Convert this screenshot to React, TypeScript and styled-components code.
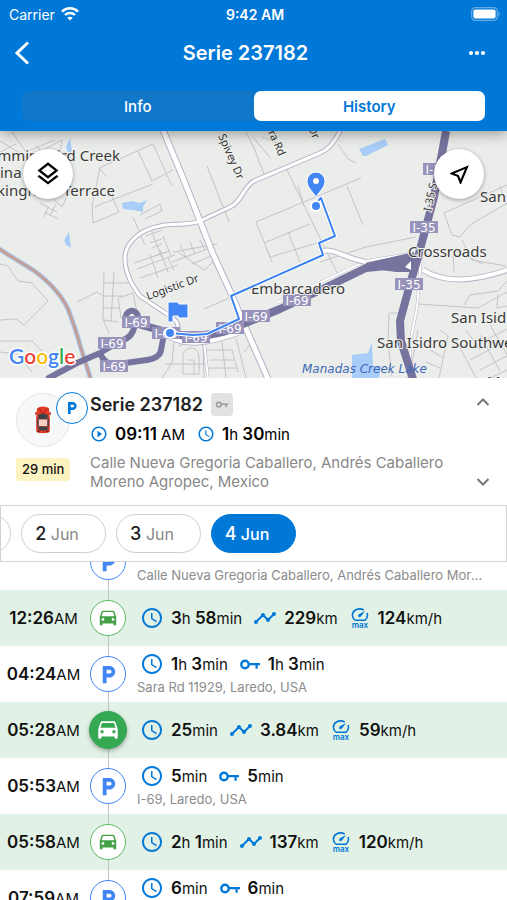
import React, { useLayoutEffect, useRef, useState } from 'react';
import styled, { createGlobalStyle, css } from 'styled-components';
import {
  MdAccessTime,
  MdOutlineLayers,
  MdOutlineNearMe,
  MdPlayCircleOutline,
  MdTimeline,
} from 'react-icons/md';

const BLUE = '#0078d7';
const PARK = '#4285f4';
const GREEN = '#34a853';

const GlobalStyle = createGlobalStyle`
  *, *::before, *::after { box-sizing: border-box; }
  body {
    margin: 0;
    background: #fff;
    color: #111;
    font-family: Inter, "Liberation Sans", sans-serif;
  }
  button { font: inherit; color: inherit; background: none; border: 0; padding: 0; cursor: pointer; }
  svg { display: block; flex: none; }
`;

const Screen = styled.div`
  display: flex;
  flex-direction: column;
  height: 100vh;
  overflow: hidden;
`;

const Header = styled.header`
  position: relative;
  z-index: 2;
  background: ${BLUE};
  color: #fff;
  padding-bottom: 10px;
  box-shadow: 0 2px 14px rgba(0, 0, 0, 0.4);
`;

const StatusBar = styled.div`
  display: grid;
  grid-template-columns: 1fr auto 1fr;
  align-items: center;
  height: 28px;
  padding: 0 6px 0 9px;
  font-size: 14px;
`;

const Carrier = styled.span`
  display: flex;
  align-items: center;
  gap: 6px;
`;

const Clock = styled.span`
  font-size: 14px;
  font-weight: 600;
`;

const Battery = styled.span`
  justify-self: end;
`;

const NavBar = styled.div`
  display: grid;
  grid-template-columns: 44px 1fr 60px;
  align-items: center;
  height: 50px;
`;

const NavButton = styled.button`
  display: grid;
  place-items: center;
  height: 44px;
`;

const NavTitle = styled.h1`
  margin: 0;
  font-size: 20px;
  font-weight: 600;
  text-align: center;
`;

const Segments = styled.div`
  display: flex;
  margin: 13px 22px 0;
  height: 30px;
  border-radius: 7px;
  background: #1177c9;
`;

const Segment = styled.button<{ $on?: boolean }>`
  flex: 1;
  border-radius: 7px;
  font-size: 15px;
  font-weight: 500;
  ${({ $on }) =>
    $on &&
    css`
      background: #fff;
      color: ${BLUE};
      font-weight: 600;
    `}
`;

const MapArea = styled.section`
  position: relative;
  flex: none;
  background: #ebedea;
`;

const MapCanvas = styled.svg`
  width: 100%;
  height: 247px;
`;

const MapButton = styled.button<{ $side: 'left' | 'right' }>`
  position: absolute;
  top: 18px;
  ${({ $side }) => $side}: 23px;
  display: grid;
  place-items: center;
  width: 50px;
  height: 50px;
  border-radius: 50%;
  background: #fff;
  color: #000;
  box-shadow: 0 1px 4px rgba(0, 0, 0, 0.35);
`;

const Card = styled.section`
  display: grid;
  grid-template-columns: 74px 1fr 28px;
  flex: none;
  padding: 15px 10px 14px 16px;
`;

const Avatar = styled.div`
  position: relative;
  display: grid;
  place-items: center;
  width: 54px;
  height: 54px;
  border: 1px solid #e4e4e4;
  border-radius: 50%;
  background: #f7f8f8;
`;

const AvatarBadge = styled.span`
  position: absolute;
  top: -2px;
  left: 39px;
  display: grid;
  place-items: center;
  width: 32px;
  height: 32px;
  border: 1px solid ${BLUE};
  border-radius: 50%;
  background: #fff;
  color: ${BLUE};
`;

const Elapsed = styled.span`
  display: inline-block;
  margin-top: 11px;
  padding: 3px 6px;
  border-radius: 3px;
  background: #fdf3c0;
  font-size: 13px;
  font-weight: 500;
  line-height: 17px;
  white-space: nowrap;
`;

const TitleLine = styled.div`
  display: flex;
  align-items: center;
  gap: 8px;
  height: 22px;
`;

const CardTitle = styled.h2`
  margin: 0;
  color: #222;
  font-size: 18px;
  font-weight: 600;
`;

const KeyTag = styled.span`
  display: grid;
  place-items: center;
  width: 22px;
  height: 23px;
  border-radius: 4px;
  background: #e2e2e2;
  color: #999;
`;

const CardFacts = styled.div`
  display: flex;
  align-items: center;
  gap: 12px;
  height: 26px;
  margin-top: 6px;
  color: #000;
`;

const Address = styled.p`
  margin: 6px 0 0;
  color: #888;
  font-size: 15px;
  line-height: 19px;
`;

const Steppers = styled.div`
  display: flex;
  flex-direction: column;
  justify-content: space-between;
  align-items: center;
  color: #777;
`;

const StepButton = styled.button`
  display: grid;
  place-items: center;
  width: 28px;
  height: 18px;
`;

const DayStrip = styled.nav`
  display: flex;
  flex: none;
  gap: 10px;
  padding: 8px calc(50% - 43px);
  border: 1px solid #d2d2d2;
  overflow-x: auto;
  scrollbar-width: none;
`;

const DayChip = styled.button<{ $on?: boolean }>`
  flex: none;
  width: 85px;
  height: 39px;
  padding-right: 12px;
  border: 1px solid #cfcfcf;
  border-radius: 20px;
  background: #fff;
  color: #888;
  font-size: 16px;
  b { color: #222; font-size: 18px; font-weight: 500; }
  ${({ $on }) =>
    $on &&
    css`
      border-color: ${BLUE};
      background: ${BLUE};
      color: #fff;
      font-weight: 500;
      b { color: #fff; }
    `}
`;

const Timeline = styled.ol`
  flex: 1;
  min-height: 0;
  margin: 0;
  padding: 0;
  list-style: none;
  overflow-y: auto;
  scrollbar-width: none;
`;

const Row = styled.li<{ $trip: boolean }>`
  display: grid;
  grid-template-columns: 87px 42px 1fr;
  height: 56px;
  background: ${({ $trip }) => ($trip ? '#e1f1e5' : '#fff')};
`;

const RowTime = styled.time`
  align-self: center;
  text-align: center;
`;

const Rail = styled.div`
  display: grid;
  place-items: center;
  background: linear-gradient(#c2c6c4, #c2c6c4) center / 1px 100% no-repeat;
`;

const Marker = styled.button<{ $kind: Kind }>`
  display: grid;
  place-items: center;
  width: 36px;
  height: 36px;
  border: 1px solid ${PARK};
  border-radius: 50%;
  background: #fff;
  color: ${PARK};
  ${({ $kind }) =>
    $kind === 'trip' &&
    css`
      border-color: #5cb860;
      color: #43a047;
    `}
  ${({ $kind }) =>
    $kind === 'active' &&
    css`
      width: 38px;
      height: 38px;
      border-color: ${GREEN};
      background: ${GREEN};
      color: #fff;
      box-shadow: 0 2px 4px rgba(0, 0, 0, 0.3);
    `}
`;

const RowBody = styled.div`
  display: flex;
  flex-direction: column;
  justify-content: center;
  min-width: 0;
  padding: 0 18px 0 8px;
`;

const Stats = styled.div`
  display: flex;
  align-items: center;
  gap: 11px;
  height: 24px;
  padding-left: 3px;
`;

const Stat = styled.span`
  display: flex;
  align-items: center;
  gap: 7px;
  white-space: nowrap;
  > svg { color: ${BLUE}; }
`;

const Place = styled.p`
  margin: 3px 0 0;
  color: #8c8c8c;
  font-size: 13px;
  line-height: 17px;
  white-space: nowrap;
  overflow: hidden;
  text-overflow: ellipsis;
`;

const Figure = styled.span`
  font-size: 15px;
  b { font-size: 17px; font-weight: 600; }
`;

/* "3h 58min" -> larger digits followed by small units */
const Value = ({ text }: { text: string }) => (
  <Figure>
    {text.split(/([\d:.]+)/).map((part, i) => (i % 2 ? <b key={i}>{part}</b> : part))}
  </Figure>
);

const WifiIcon = () => (
  <svg width="18" height="14" viewBox="0 0 18 14" fill="none" stroke="#fff" strokeWidth="2.4" aria-hidden>
    <path d="M1 4.600C5.400.2 12.600.2 17 4.600" />
    <path d="M4 8c2.800-2.700 7.200-2.700 10 0" />
    <path d="M9 13.600 6.200 10.800c1.600-1.500 4-1.500 5.600 0z" fill="#fff" stroke="none" />
  </svg>
);

const BatteryIcon = () => (
  <svg width="30" height="14" viewBox="0 0 30 14" aria-hidden>
    <rect x=".7" y=".7" width="25.600" height="12.600" rx="3.600" fill="none" stroke="#68ace6" strokeWidth="1.200" />
    <rect x="2.400" y="2.400" width="22.200" height="9.200" rx="2" fill="#fff" />
    <path d="M27.500 4.600c1.600.6 1.600 4.200 0 4.800z" fill="#68ace6" />
  </svg>
);

const BackIcon = () => (
  <svg width="16" height="26" viewBox="0 0 16 26" fill="none" stroke="#fff" strokeWidth="3" aria-hidden>
    <path d="M14 2.500 3 13l11 10.500" />
  </svg>
);

const DotsIcon = () => (
  <svg width="18" height="6" viewBox="0 0 18 6" fill="#fff" aria-hidden>
    <circle cx="3" cy="3" r="2.100" />
    <circle cx="9" cy="3" r="2.100" />
    <circle cx="15" cy="3" r="2.100" />
  </svg>
);

const ParkingIcon = ({ size }: { size: number }) => (
  <svg width={size} height={size} viewBox="0 0 24 24" fill="currentColor" aria-hidden>
    <path d="M13 3H6v18h4v-6h3c3.310 0 6-2.690 6-6s-2.690-6-6-6zm.2 8H10V7h3.200c1.100 0 2 .9 2 2s-.9 2-2 2z" />
  </svg>
);

const FrontCarIcon = ({ size }: { size: number }) => (
  <svg width={size} height={size} viewBox="0 0 24 24" fill="currentColor" aria-hidden>
    <path d="M18.920 5.010C18.720 4.420 18.160 4 17.500 4h-11c-.66 0-1.210.42-1.420 1.010L3 11v8c0 .55.45 1 1 1h1c.55 0 1-.45 1-1v-1h12v1c0 .55.45 1 1 1h1c.55 0 1-.45 1-1v-8l-2.080-5.990zM6.500 15c-.83 0-1.500-.67-1.500-1.500S5.670 12 6.500 12s1.500.67 1.500 1.500S7.330 15 6.500 15zm11 0c-.83 0-1.500-.67-1.500-1.500s.67-1.500 1.500-1.500 1.500.67 1.500 1.500-.67 1.500-1.500 1.500zM5 10l1.500-4.500h11L19 10H5z" />
  </svg>
);

const KeyIcon = ({ width = 22 }: { width?: number }) => (
  <svg width={width} height={width / 2} viewBox="0 0 22 11" fill="none" stroke="currentColor" aria-hidden>
    <circle cx="6" cy="5.500" r="3.700" strokeWidth="2.400" />
    <path d="M10 5.200H21M17.600 5v4.800" strokeWidth="2.200" />
  </svg>
);

const SpeedIcon = () => (
  <svg width="22" height="21" viewBox="-2 0 22 21" fill="none" stroke="currentColor" aria-hidden>
    <path d="M4 12.200h10c1.700-1.400 2.500-3 2.500-4.900 0-.8-.2-1.600-.5-2.300M4 12.200C.4 9.200.6 4.300 4.500 2 7 .6 10.300.6 12.700 2" strokeWidth="1.600" />
    <path d="M7.300 8.600c-.6-1 .2-2 1-2.500L14 3l-3.900 5.300c-.7 1-2.200 1.200-2.800.3z" fill="currentColor" stroke="none" />
    <text x="9" y="20" textAnchor="middle" fontSize="8" fontWeight="600" fill="currentColor" stroke="none">max</text>
  </svg>
);

const ChevronIcon = ({ up }: { up?: boolean }) => (
  <svg width="14" height="10" viewBox="0 0 14 10" fill="none" stroke="currentColor" strokeWidth="2" aria-hidden>
    <path d={up ? 'M1.500 8 7 2.500 12.500 8' : 'M1.500 2 7 7.500 12.500 2'} />
  </svg>
);

const CarIcon = () => (
  <svg width="18" height="30" viewBox="0 0 18 30" aria-hidden>
    <path d="M1 8.500h2M15 8.500h2" stroke="#c0281c" strokeWidth="2" />
    <path d="M3 3.500C5 .8 13 .8 15 3.500l.8 9V26c-1 3-12.600 3-13.600 0V12.500z" fill="#e23b2a" />
    <path d="M5 3.200 8 8h2l3-4.800" fill="none" stroke="#b82317" strokeWidth="1" />
    <path d="M4 10.500c2-2.500 8-2.500 10 0l-1 4H5z" fill="#3d4247" />
    <path d="M3.200 12.500 4.800 15v6l-1.600 2zM14.800 12.500 13.200 15v6l1.600 2z" fill="#3d4247" />
    <path d="M4.800 14.500h8.400v6.500H4.800z" fill="#f9cfc4" />
    <path d="M5 21.500h8l1 3c-2.500 1.500-7.500 1.500-10 0z" fill="#3d4247" />
    <path d="M3 26.500h3M12 26.500h3" stroke="#8e1a12" strokeWidth="1.500" />
  </svg>
);

const minorRoads = [
  'M0 141 28 158 62 140 60 152 45 160M30 150 55 140M36 146l20 18M0 152l16-8M12 132l24 34',
  'M99 168 153 144 172 186M99 168 107 177 M100 168 92 206 93 223 119 212 110 192M94 207 153 184M138 151 152 181 173 170',
  'M40 203l17 9M50 196l12 11 8-18M44 212l14 7M48 208 44 217M56 204 50 216',
  'M133 217 145 245M140 215 160 204 162 211 145 219M146 236l16-6M150 243l12-4M152 248l10-4M154 256l12-4M163 236l8 20M152 232l10 26M173 252l44-8M172 262l38-14M180 245l6 12M190 242l5 12M200 240l5 10',
  'M134 263l36-12M137 269l38-14M140 278l38-13M150 254l8 24M160 250l8 22M168 258l6 12M178 252l26 18 14-12M192 264l24-10',
  'M246 132 253 146M207 166 229 222M253 145 264 174M262 137l20 8M285 166 340 279M253 137l18 22M338 144l10 15 8 4',
  'M256 222 361 178M347 186 363 225M256 222 270 257M264 243 310 224M288 232 300 262M270 257 320 242M304 206l-6-20M204 309l46-20M272 262l-6-14',
  'M320 262l46-15 50-10M0 264l8 2 10 15 14 2 16 18-24 24-8-6-16 1M0 341h32l10 10 4 14 20 8M0 352l18 2 14 18',
  'M104 271l-1 48 6 14M114 272l-3 50M104 283h24M103 296h20M102 308h18M77 302l20-10 6 4M119 298l14-5 5 24-16 8M121 318l-3-20M104 320l14 2',
  'M174 341l-2 22-10 15M178 346l18-5 7 5 1 32M183 357c0-12 16-12 16 0v17h-16zM188 360h6v14M206 350h26l6 22M210 360h24M222 342l4 36M236 338l10 40M207 368h30M252 342l-8 10M165 364h40',
  'M444 213l63-28M444 213l8 22 8 2 10-12 37-22M500 186l6 18M462 240l10 20 34 6M453 250l30 14',
  'M418 304l60 4 29-16M464 305l6-10 28-4 9-10M390 313h8M389 313l-1 30 4 34M453 254l1 18M498 294l-1 14 10-2',
  'M418 330l-8 44M440 330l8 6-9 42M430 350l14 8M426 362l14 6M456 340l20 38M466 330l14 20M476 345l31-16M470 360l37-20M480 370l27-14M490 378l17-8M490 325l17 30M480 335l20 36',
];

const majorRoads = [
  'M163 130 183 178 200 221 213 254 230 291 247 331 268 379',
  'M340 131Q332 148 320 153L254 181C243 187 242 202 230 207L200 221C188 226 174 223 160 226C138 230 126 244 125 256C124 274 134 288 140 296L170 316Q179 321 178 330',
];

const sideRoads = ['M423 270C442 282 470 283 507 270', 'M322 251C334 248 344 258 366 262', 'M170 337C186 346 206 344 238 333'];

const rampRoads = 'M421 257 417 308 411 338 409 378M449 131 436 194M276 303 334 276 366 261 408 254M204 341l4 37';

const highways = [
  'M47 379 77 363 100 353 120 341Q134 338 135 322A6 6 0 1 0 126 318',
  'M100 353Q105 366 118 364L147 360Q160 358 161 350L164 334',
  'M138 324 170 333C190 338 206 336 226 331L280 309 333 284 366 268 396 265 416 258',
  'M446 131 434 197 418 257 410 284 400 321 401 341 413 379',
];

const shields: [number, number, string][] = [
  [136, 322, 'I-69'],
  [112, 343, 'I-69'],
  [114, 366, 'I-69'],
  [166, 333, 'I-69'],
  [196, 337, 'I-69'],
  [230, 328, 'I-69'],
  [256, 316, 'I-69'],
  [297, 300, 'I-69'],
  [437, 169, 'I-35'],
  [424, 227, 'I-35'],
  [409, 284, 'I-35'],
];

const TownLabel = styled.text`
  font: 15px "Noto Sans", "Open Sans", sans-serif;
  fill: #3a3a3a;
  stroke: #f1f2f0;
  stroke-width: 2px;
  paint-order: stroke;
`;

const StreetLabel = styled.text`
  font: 11px "Noto Sans", "Open Sans", sans-serif;
  fill: #333;
  stroke: #f1f2f0;
  stroke-width: 2px;
  paint-order: stroke;
`;

const WaterLabel = styled.text`
  font: italic 12px "DejaVu Sans", sans-serif;
  fill: #3b68b8;
`;

const ShieldLabel = styled.text`
  font: 12px "DejaVu Sans", sans-serif;
  fill: #fff;
  text-anchor: middle;
`;

const Wordmark = styled.text`
  font: 600 21px Lato, sans-serif;
  stroke: #fff;
  stroke-width: 3px;
  stroke-linejoin: round;
  paint-order: stroke;
`;

const CityMap = () => (
  <MapCanvas viewBox="0 131 507 247" preserveAspectRatio="xMidYMid slice" role="img" aria-label="Trip map">
    <rect x="-200" y="100" width="1000" height="320" fill="#ebedea" />
    <g fill="#a9cdf8">
      <path d="M66 147l4-9 2 13-4 2zM122 203l10-2 8 2 7-3-4 7 0 5-10-2-10-1zM64 240l5-8 2 16-5-3zM359 149l26-10 3 6-22 11-3 0z" />
      <path d="M352 379v-24l16-2 4-11 1 24 8 0-2 13z" />
    </g>
    <path d="M-5 246 7 254 33 270Q58 288 68 309 76 330 80 345L91 380" fill="none" stroke="#aacbf2" strokeWidth="5" />
    <path d="M-5 246 7 254 33 270Q58 288 68 309 76 330 80 345L91 380" fill="none" stroke="#c39f98" strokeWidth="3" />
    <g fill="none" stroke="#c3c4cb" strokeWidth="1">
      {minorRoads.map((d) => (
        <path key={d} d={d} />
      ))}
    </g>
    <g fill="none" strokeLinejoin="round">
      <path d={rampRoads} stroke="#b5b3c8" strokeWidth="3" />
      <path d={rampRoads} stroke="#fff" strokeWidth="2" />
      {sideRoads.map((d) => (
        <path key={d} d={d} stroke="#b9b9c9" strokeWidth="6" />
      ))}
      {majorRoads.map((d, i) => (
        <path key={d} d={d} stroke="#b3b2c6" strokeWidth={i ? 5 : 7} />
      ))}
      {sideRoads.map((d) => (
        <path key={d} d={d} stroke="#fff" strokeWidth="4" />
      ))}
      {majorRoads.map((d, i) => (
        <path key={d} d={d} stroke="#fff" strokeWidth={i ? 3 : 5} />
      ))}
      {highways.map((d, i) => (
        <path key={d} d={d} stroke="#77739f" strokeWidth={i < 2 ? 6 : 8} />
      ))}
      <path d="M366 263 414 252 412 272 396 272 366 268z" fill="#77739f" />
      <path d="M405 267l6-6 0 9z" fill="#fff" />
    </g>
    {shields.map(([x, y, name]) => (
      <g key={`${x}-${y}`}>
        <rect x={x - 14} y={y - 6} width="28" height="12" fill="#9893ba" />
        <ShieldLabel x={x} y={y + 5}>{name}</ShieldLabel>
      </g>
    ))}
    <TownLabel x="120" y="161" textAnchor="end">Hummingbird Creek</TownLabel>
    <TownLabel x="0" y="178">ina</TownLabel>
    <TownLabel x="115" y="196" textAnchor="end">Buckingham Terrace</TownLabel>
    <TownLabel x="480" y="202">San</TownLabel>
    <TownLabel x="408" y="257">Crossroads</TownLabel>
    <TownLabel x="251" y="294">Embarcadero</TownLabel>
    <TownLabel x="451" y="323">San Isidro</TownLabel>
    <TownLabel x="377" y="348">San Isidro Southwest</TownLabel>
    <TownLabel x="487" y="387">Manadas</TownLabel>
    <WaterLabel x="302" y="373">Manadas Creek Lake</WaterLabel>
    <StreetLabel transform="translate(218 136) rotate(66)">Spivey Dr</StreetLabel>
    <StreetLabel transform="translate(263 121) rotate(66)">Sara Rd</StreetLabel>
    <StreetLabel transform="translate(302 115) rotate(66)">ey Dr</StreetLabel>
    <StreetLabel transform="translate(148 300) rotate(-20)">Logistic Dr</StreetLabel>
    <StreetLabel transform="translate(431 212) rotate(-78)">I-35 S</StreetLabel>
    <g fill="none" strokeLinejoin="round">
      <path d="M316 203 321 198 335 236 319 243 323 255 231 296 239 319 207 334 193 335 170 333" stroke="#fff" strokeWidth="4" />
      <path d="M316 203 321 198 335 236 319 243 323 255 231 296 239 319 207 334 193 335 170 333" stroke="#3b82f0" strokeWidth="2" />
    </g>
    <g stroke="#fff" strokeWidth="2" fill={PARK}>
      <circle cx="316" cy="206" r="5" />
      <circle cx="170" cy="333" r="5" />
      <path d="M168 302h10l1 2h9v14h-9l-1-2h-5v6h-5z" strokeWidth="1" />
      <path d="M316 197c-4-6-9-10-9-16a9 9 0 0 1 18 0c0 6-5 10-9 16z" strokeWidth="1" />
    </g>
    <circle cx="316" cy="181" r="3" fill="#fff" />
    <Wordmark x="9" y="364">
      <tspan fill="#4285f4">G</tspan>
      <tspan fill="#ea4335">o</tspan>
      <tspan fill="#fbbc05">o</tspan>
      <tspan fill="#4285f4">g</tspan>
      <tspan fill="#34a853">l</tspan>
      <tspan fill="#ea4335">e</tspan>
    </Wordmark>
  </MapCanvas>
);

type Kind = 'park' | 'trip' | 'active';

interface Entry {
  time?: string;
  kind: Kind;
  duration: string;
  engine?: string;
  place?: string;
  distance?: string;
  speed?: string;
}

const entries: Entry[] = [
  { kind: 'park', duration: '26min', engine: '26min', place: 'Calle Nueva Gregoria Caballero, Andrés Caballero Moreno Agropec, Mexico' },
  { time: '12:26', kind: 'trip', duration: '3h 58min', distance: '229km', speed: '124km/h' },
  { time: '04:24', kind: 'park', duration: '1h 3min', engine: '1h 3min', place: 'Sara Rd 11929, Laredo, USA' },
  { time: '05:28', kind: 'active', duration: '25min', distance: '3.84km', speed: '59km/h' },
  { time: '05:53', kind: 'park', duration: '5min', engine: '5min', place: 'I-69, Laredo, USA' },
  { time: '05:58', kind: 'trip', duration: '2h 1min', distance: '137km', speed: '120km/h' },
  { time: '07:59', kind: 'park', duration: '6min', engine: '6min', place: 'I-69, Laredo, USA' },
];

const TimelineRow = ({ entry }: { entry: Entry }) => {
  const parked = entry.kind === 'park';
  return (
    <Row $trip={!parked}>
      <RowTime>{entry.time && <Value text={`${entry.time}AM`} />}</RowTime>
      <Rail>
        <Marker $kind={entry.kind} aria-label={`${parked ? 'Parked' : 'Trip'} ${entry.time ?? ''}`}>
          {parked ? <ParkingIcon size={23} /> : <FrontCarIcon size={entry.kind === 'active' ? 26 : 22} />}
        </Marker>
      </Rail>
      <RowBody>
        <Stats>
          <Stat>
            <MdAccessTime size={24} />
            <Value text={entry.duration} />
          </Stat>
          {entry.engine && (
            <Stat>
              <KeyIcon />
              <Value text={entry.engine} />
            </Stat>
          )}
          {entry.distance && (
            <Stat>
              <MdTimeline size={24} />
              <Value text={entry.distance} />
            </Stat>
          )}
          {entry.speed && (
            <Stat>
              <SpeedIcon />
              <Value text={entry.speed} />
            </Stat>
          )}
        </Stats>
        {entry.place && <Place>{entry.place}</Place>}
      </RowBody>
    </Row>
  );
};

const tabs = ['Info', 'History'];
const days = [1, 2, 3, 4];

export default function App() {
  const [tab, setTab] = useState('History');
  const [day, setDay] = useState(4);
  const listRef = useRef<HTMLOListElement>(null);
  const stripRef = useRef<HTMLElement>(null);

  useLayoutEffect(() => {
    if (listRef.current) listRef.current.scrollTop = 28;
    if (stripRef.current) stripRef.current.scrollLeft = stripRef.current.scrollWidth;
  }, []);

  return (
    <>
      <GlobalStyle />
      <Screen>
        <Header>
          <StatusBar>
            <Carrier>Carrier <WifiIcon /></Carrier>
            <Clock>9:42 AM</Clock>
            <Battery><BatteryIcon /></Battery>
          </StatusBar>
          <NavBar>
            <NavButton aria-label="Back"><BackIcon /></NavButton>
            <NavTitle>Serie 237182</NavTitle>
            <NavButton aria-label="More"><DotsIcon /></NavButton>
          </NavBar>
          <Segments>
            {tabs.map((name) => (
              <Segment key={name} $on={name === tab} onClick={() => setTab(name)}>{name}</Segment>
            ))}
          </Segments>
        </Header>

        <MapArea>
          <CityMap />
          <MapButton $side="left" aria-label="Layers"><MdOutlineLayers size={28} /></MapButton>
          <MapButton $side="right" aria-label="Center"><MdOutlineNearMe size={25} /></MapButton>
        </MapArea>

        <Card>
          <div>
            <Avatar>
              <CarIcon />
              <AvatarBadge><ParkingIcon size={16} /></AvatarBadge>
            </Avatar>
            <Elapsed>29 min</Elapsed>
          </div>
          <div>
            <TitleLine>
              <CardTitle>Serie 237182</CardTitle>
              <KeyTag><KeyIcon width={14} /></KeyTag>
            </TitleLine>
            <CardFacts>
              <Stat>
                <MdPlayCircleOutline size={18} />
                <Value text="09:11 AM" />
              </Stat>
              <Stat>
                <MdAccessTime size={18} />
                <Value text="1h 30min" />
              </Stat>
            </CardFacts>
            <Address>Calle Nueva Gregoria Caballero, Andrés Caballero Moreno Agropec, Mexico</Address>
          </div>
          <Steppers>
            <StepButton aria-label="Previous"><ChevronIcon up /></StepButton>
            <StepButton aria-label="Next"><ChevronIcon /></StepButton>
          </Steppers>
        </Card>

        <DayStrip ref={stripRef} aria-label="Days">
          {days.map((d) => (
            <DayChip key={d} $on={d === day} onClick={() => setDay(d)}>
              <b>{d}</b> Jun
            </DayChip>
          ))}
        </DayStrip>

        <Timeline ref={listRef}>
          {entries.map((entry, i) => (
            <TimelineRow key={i} entry={entry} />
          ))}
        </Timeline>
      </Screen>
    </>
  );
}
